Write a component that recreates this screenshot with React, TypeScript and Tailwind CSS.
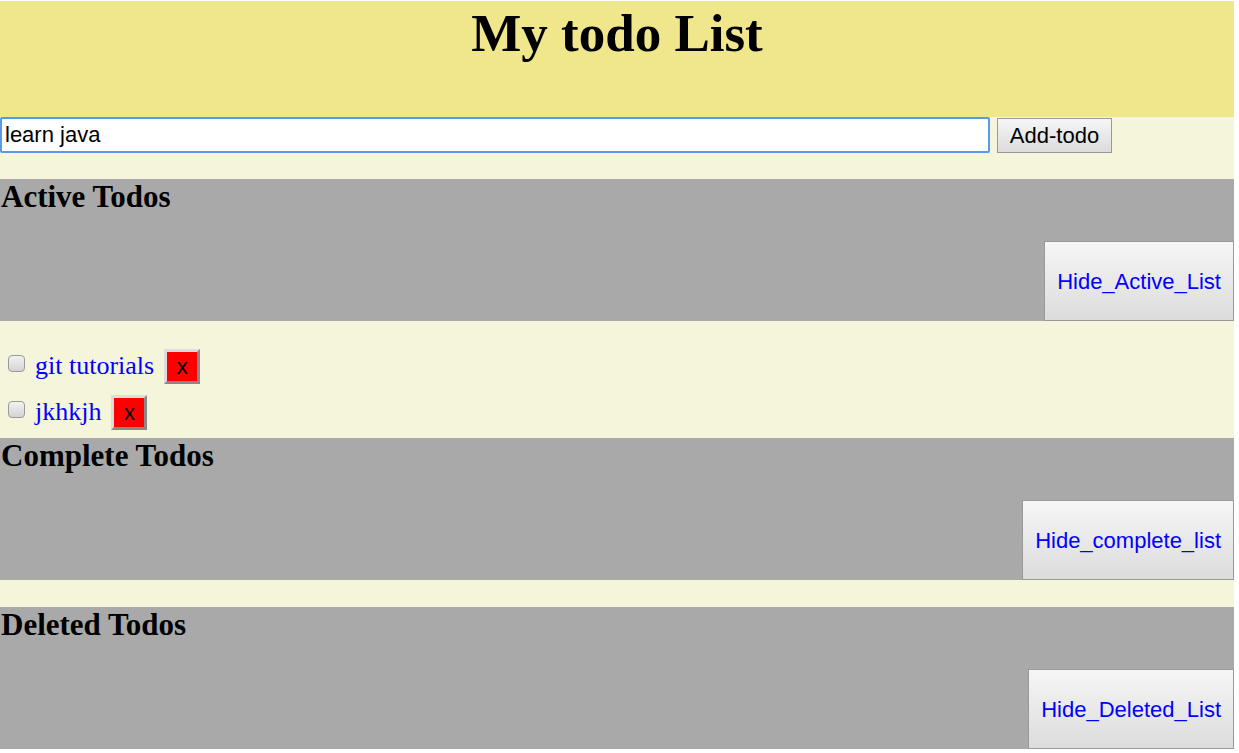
import React from 'react';

const serif = { fontFamily: '"Liberation Serif", "Times New Roman", serif' };

const Section: React.FC<{ title: string; button: string }> = ({ title, button }) => (
  <div className="h-[142px] bg-[#a9a9a9] flex flex-col">
    <h2 className="text-[31px] leading-[30px] font-bold pt-[3px] pl-[1px] text-black" style={serif}>
      {title}
    </h2>
    <button className="mt-auto self-end h-[80px] px-[12px] text-[22px] text-[#0000ff] border border-[#999] bg-gradient-to-b from-[#f6f6f6] to-[#dcdcdc]">
      {button}
    </button>
  </div>
);

const TodoItem: React.FC<{ text: string }> = ({ text }) => (
  <div className="flex items-center h-[35px]">
    <span className="ml-[8px] mt-[-6px] w-[17px] h-[17px] rounded-[4px] border border-[#9a9a9a] bg-gradient-to-b from-[#f2f2f2] to-[#d4d4d4]" />
    <span className="ml-[10px] mt-[-3px] text-[26px] text-[#0000ff]" style={serif}>
      {text}
    </span>
    <button className="ml-[10px] w-[36px] h-[35px] bg-[#ff0000] border-[3px] border-t-[#dddddd] border-l-[#dddddd] border-b-[#888] border-r-[#888] text-[22px] leading-none text-black">
      x
    </button>
  </div>
);

export default function App() {
  return (
    <div className="w-[1234px] pt-[1px]" style={{ fontFamily: '"Liberation Sans", Arial, sans-serif' }}>
      {/* Header */}
      <div className="h-[116px] bg-[#f0e68c] pt-[6px]">
        <h1 className="text-center text-[53px] leading-[52px] font-bold text-black" style={serif}>
          My todo List
        </h1>
      </div>

      {/* Input row */}
      <div className="h-[62px] bg-[#f5f5dc] flex items-start">
        <input
          defaultValue="learn java"
          className="w-[990px] h-[36px] bg-white border-2 border-[#5b97ea] rounded-[2px] px-[3px] text-[22px] text-black outline-none"
        />
        <button className="ml-[7px] mt-[1px] w-[115px] h-[35px] text-[22px] text-black border border-[#999] bg-gradient-to-b from-[#f6f6f6] to-[#dcdcdc]">
          Add-todo
        </button>
      </div>

      <Section title="Active Todos" button="Hide_Active_List" />

      <div className="bg-[#f5f5dc] pt-[28px] pb-[8px] flex flex-col gap-[11px]">
        <TodoItem text="git tutorials" />
        <TodoItem text="jkhkjh" />
      </div>

      <Section title="Complete Todos" button="Hide_complete_list" />

      <div className="h-[27px] bg-[#f5f5dc]" />

      <Section title="Deleted Todos" button="Hide_Deleted_List" />
    </div>
  );
}
